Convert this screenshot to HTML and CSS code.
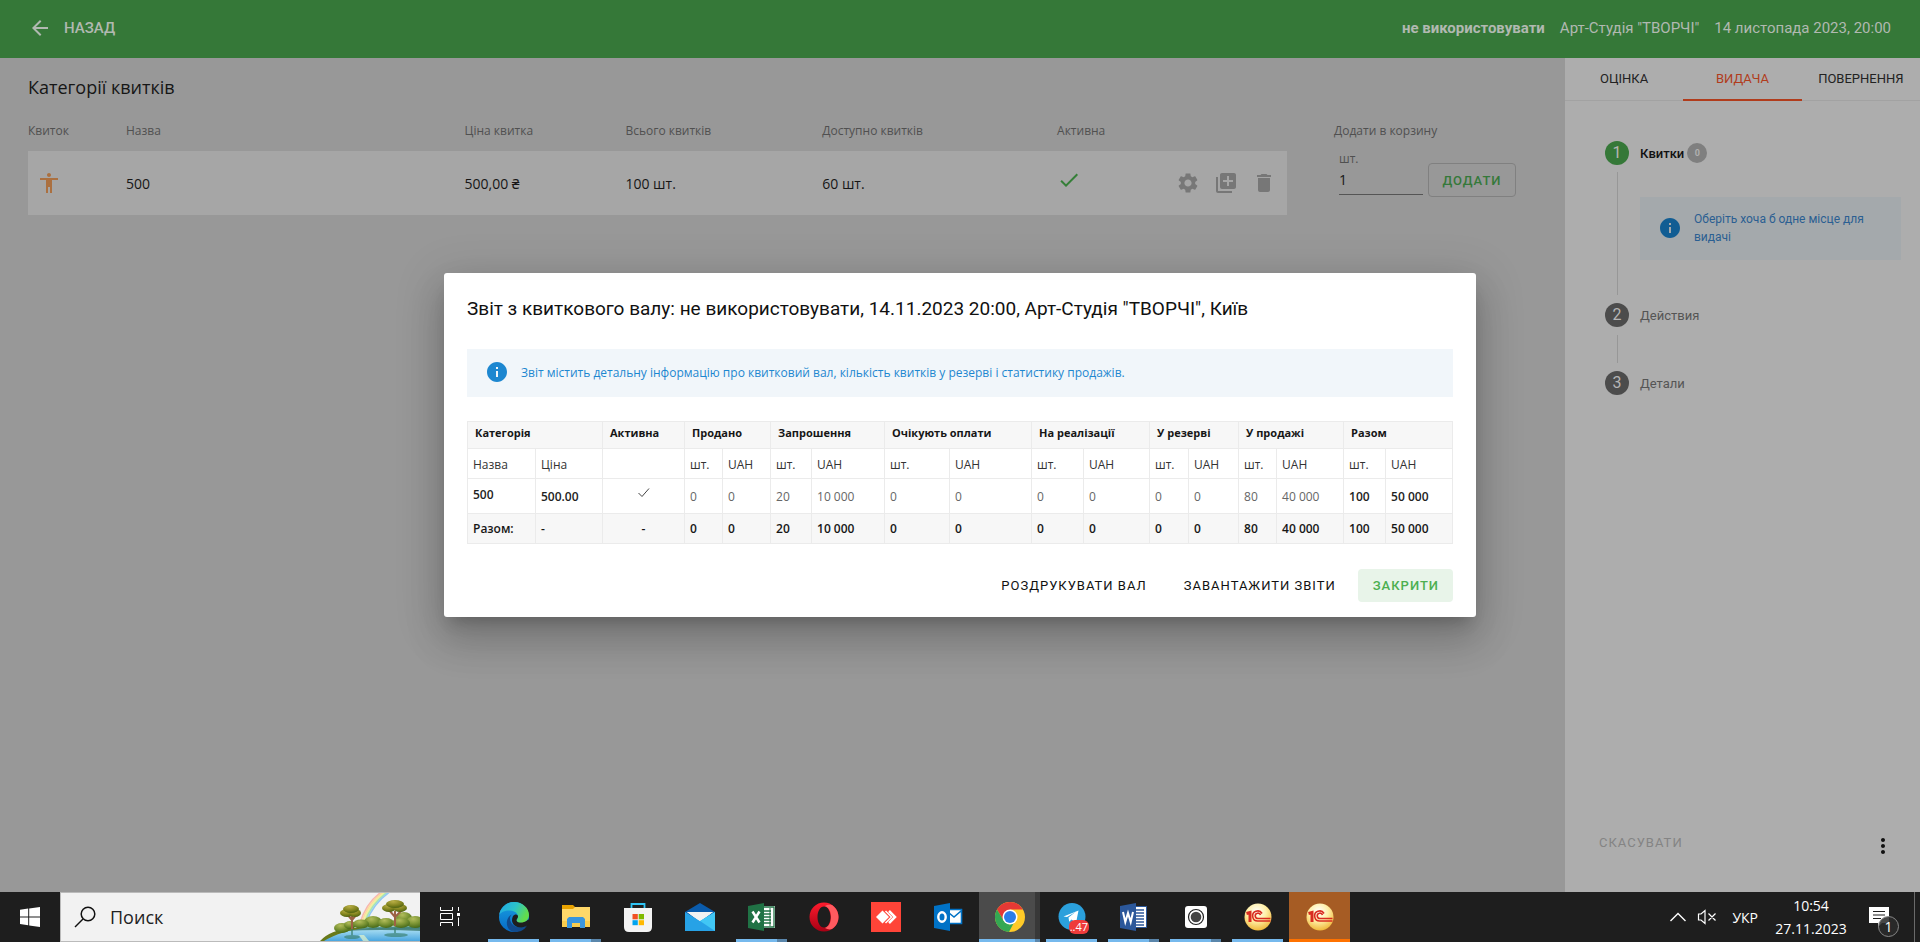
FILE: index.html
```html
<!DOCTYPE html>
<html lang="uk">
<head>
<meta charset="utf-8">
<title>Категорії квитків</title>
<link rel="stylesheet" href="styles.css">
</head>
<body>
<div class="app">
  <header class="topbar">
    <a class="back" href="#">
      <svg class="icon" viewBox="0 0 24 24"><path d="M20 11H7.83l5.59-5.59L12 4l-8 8 8 8 1.41-1.41L7.83 13H20v-2z"/></svg>
      <span>НАЗАД</span>
    </a>
    <div class="event">
      <strong>не використовувати</strong>
      <span>Арт-Студія "ТВОРЧІ"</span>
      <span>14 листопада 2023, 20:00</span>
    </div>
  </header>

  <div class="workspace">
    <main class="main">
      <h1 class="main-title">Категорії квитків</h1>
      <div class="tickets">
        <table class="categories">
          <colgroup><col class="w-ticket"><col class="w-name"><col class="w-price"><col class="w-total"><col class="w-free"><col class="w-active"><col class="w-act"><col class="w-act"><col class="w-last"></colgroup>
          <thead>
            <tr><th>Квиток</th><th>Назва</th><th>Ціна квитка</th><th>Всього квитків</th><th>Доступно квитків</th><th>Активна</th><td colspan="3"></td></tr>
          </thead>
          <tbody>
            <tr>
              <td class="cell-person"><svg class="icon person" viewBox="0 0 24 24"><path d="M12 2c1.1 0 2 .9 2 2s-.9 2-2 2-2-.9-2-2 .9-2 2-2zm9 7h-6v13h-2v-6h-2v6H9V9H3V7h18v2z"/></svg></td>
              <td>500</td>
              <td>500,00 ₴</td>
              <td>100 шт.</td>
              <td>60 шт.</td>
              <td class="cell-check"><svg class="icon check" viewBox="0 0 24 24"><path d="M9 16.17L4.83 12l-1.42 1.41L9 19 21 7l-1.41-1.41z"/></svg></td>
              <td><button class="icon-btn" aria-label="Налаштування"><svg class="icon" viewBox="0 0 24 24"><path d="M19.14 12.94c.04-.3.06-.61.06-.94 0-.32-.02-.64-.07-.94l2.03-1.58c.18-.14.23-.41.12-.61l-1.92-3.32c-.12-.22-.37-.29-.59-.22l-2.39.96c-.5-.38-1.03-.7-1.62-.94l-.36-2.54c-.04-.24-.24-.41-.48-.41h-3.84c-.24 0-.43.17-.47.41l-.36 2.54c-.59.24-1.13.57-1.62.94l-2.39-.96c-.22-.08-.47 0-.59.22L2.74 8.87c-.12.21-.08.47.12.61l2.03 1.58c-.05.3-.09.63-.09.94s.02.64.07.94l-2.03 1.58c-.18.14-.23.41-.12.61l1.92 3.32c.12.22.37.29.59.22l2.39-.96c.5.38 1.03.7 1.62.94l.36 2.54c.05.24.24.41.48.41h3.84c.24 0 .44-.17.47-.41l.36-2.54c.59-.24 1.13-.56 1.62-.94l2.39.96c.22.08.47 0 .59-.22l1.92-3.32c.12-.22.07-.47-.12-.61l-2.01-1.58zM12 15.6c-1.98 0-3.6-1.62-3.6-3.6s1.62-3.6 3.6-3.6 3.6 1.62 3.6 3.6-1.62 3.6-3.6 3.6z"/></svg></button></td>
              <td><button class="icon-btn" aria-label="Копіювати"><svg class="icon" viewBox="0 0 24 24"><path d="M4 6H2v14c0 1.1.9 2 2 2h14v-2H4V6zm16-4H8c-1.1 0-2 .9-2 2v12c0 1.1.9 2 2 2h12c1.1 0 2-.9 2-2V4c0-1.1-.9-2-2-2zm-1 9h-4v4h-2v-4H9V9h4V5h2v4h4v2z"/></svg></button></td>
              <td><button class="icon-btn" aria-label="Видалити"><svg class="icon" viewBox="0 0 24 24"><path d="M6 19c0 1.1.9 2 2 2h8c1.1 0 2-.9 2-2V7H6v12zM19 4h-3.5l-1-1h-5l-1 1H5v2h14V4z"/></svg></button></td>
            </tr>
          </tbody>
        </table>
        <div class="add">
          <div class="add-title">Додати в корзину</div>
          <div class="add-row">
            <div class="field">
              <label for="qty">шт.</label>
              <input id="qty" type="text" value="1">
            </div>
            <button class="add-btn">ДОДАТИ</button>
          </div>
        </div>
      </div>
    </main>

    <aside class="side">
      <nav class="tabs">
        <button class="tab">ОЦІНКА</button>
        <button class="tab tab-active">ВИДАЧА</button>
        <button class="tab">ПОВЕРНЕННЯ</button>
      </nav>
      <div class="steps">
        <div class="step step-on"><span class="num">1</span><span>Квитки</span><span class="badge">0</span></div>
        <div class="step-body step-body-tall">
          <div class="side-info">
            <svg class="icon" viewBox="0 0 24 24"><path d="M12 2C6.48 2 2 6.48 2 12s4.48 10 10 10 10-4.48 10-10S17.52 2 12 2zm1 15h-2v-6h2v6zm0-8h-2V7h2v2z"/></svg>
            <span>Оберіть хоча б одне місце для видачі</span>
          </div>
        </div>
        <div class="step"><span class="num">2</span><span>Действия</span></div>
        <div class="step-body"></div>
        <div class="step"><span class="num">3</span><span>Детали</span></div>
      </div>
      <div class="side-foot">
        <button class="cancel" disabled>СКАСУВАТИ</button>
        <button class="more" aria-label="Ще"><svg class="icon" viewBox="0 0 24 24"><path d="M12 8c1.1 0 2-.9 2-2s-.9-2-2-2-2 .9-2 2 .9 2 2 2zm0 2c-1.1 0-2 .9-2 2s.9 2 2 2 2-.9 2-2-.9-2-2-2zm0 6c-1.1 0-2 .9-2 2s.9 2 2 2 2-.9 2-2-.9-2-2-2z"/></svg></button>
      </div>
    </aside>
  </div>

  <div class="overlay">
    <section class="dialog" role="dialog" aria-labelledby="report-title">
      <h2 class="dialog-title" id="report-title">Звіт з квиткового валу: не використовувати, 14.11.2023 20:00, Арт-Студія "ТВОРЧІ", Київ</h2>
      <div class="info">
        <svg class="icon" viewBox="0 0 24 24"><path d="M12 2C6.48 2 2 6.48 2 12s4.48 10 10 10 10-4.48 10-10S17.52 2 12 2zm1 15h-2v-6h2v6zm0-8h-2V7h2v2z"/></svg>
        <span>Звіт містить детальну інформацію про квитковий вал, кількість квитків у резерві і статистику продажів.</span>
      </div>
      <table class="report">
        <colgroup><col class="r68"><col class="r67"><col class="r82"><col class="r38"><col class="r48"><col class="r41"><col class="r73"><col class="r65"><col class="r82"><col class="r52"><col class="r66"><col class="r39"><col class="r50"><col class="r38"><col class="r67"><col class="r42"><col class="r67"></colgroup>
        <thead>
          <tr><th colspan="2">Категорія</th><th>Активна</th><th colspan="2">Продано</th><th colspan="2">Запрошення</th><th colspan="2">Очікують оплати</th><th colspan="2">На реалізації</th><th colspan="2">У резерві</th><th colspan="2">У продажі</th><th colspan="2">Разом</th></tr>
        </thead>
        <tbody>
          <tr class="r-sub"><td>Назва</td><td>Ціна</td><td></td><td>шт.</td><td>UAH</td><td>шт.</td><td>UAH</td><td>шт.</td><td>UAH</td><td>шт.</td><td>UAH</td><td>шт.</td><td>UAH</td><td>шт.</td><td>UAH</td><td>шт.</td><td>UAH</td></tr>
          <tr class="r-data"><td class="bold raised">500</td><td class="bold">500.00</td><td class="mid raised"><svg class="tick" viewBox="0 0 14 12"><path d="M1.500 6l3.500 3.500 7-8"/></svg></td><td>0</td><td>0</td><td>20</td><td>10 000</td><td>0</td><td>0</td><td>0</td><td>0</td><td>0</td><td>0</td><td>80</td><td>40 000</td><td class="bold">100</td><td class="bold">50 000</td></tr>
          <tr class="r-sum"><td>Разом:</td><td>-</td><td class="mid">-</td><td>0</td><td>0</td><td>20</td><td>10 000</td><td>0</td><td>0</td><td>0</td><td>0</td><td>0</td><td>0</td><td>80</td><td>40 000</td><td>100</td><td>50 000</td></tr>
        </tbody>
      </table>
      <div class="actions">
        <button class="btn">РОЗДРУКУВАТИ ВАЛ</button>
        <button class="btn">ЗАВАНТАЖИТИ ЗВІТИ</button>
        <button class="btn btn-close">ЗАКРИТИ</button>
      </div>
    </section>
  </div>
</div>

<footer class="taskbar">
  <button class="start" aria-label="Пуск"><svg width="20" height="20" viewBox="0 0 20 20"><path fill="#fff" d="M0 2.8L8.2 1.6V9.4H0zM9.2 1.4L20 0V9.4H9.2zM0 10.4H8.2V18.2L0 17.1zM9.2 10.4H20V20L9.2 18.5z"/></svg></button>
  <div class="search">
    <svg class="loupe" width="22" height="22" viewBox="0 0 22 22"><circle cx="14" cy="8" r="6.8"/><path d="M9 13L1 21"/></svg>
    <input type="text" placeholder="Поиск" aria-label="Поиск">
    <svg class="scene" width="100" height="48" viewBox="0 0 100 48">
      <defs>
        <linearGradient id="water" x1="0" y1="0" x2="0" y2="1"><stop offset="0" stop-color="#4f9f9c"/><stop offset=".3" stop-color="#9fd8f0"/><stop offset="1" stop-color="#4aa6e0"/></linearGradient>
        <radialGradient id="bush" cx=".4" cy=".25" r=".8"><stop offset="0" stop-color="#b3bd5c"/><stop offset=".5" stop-color="#7b9434"/><stop offset="1" stop-color="#3f6416"/></radialGradient>
        <radialGradient id="crown" cx=".4" cy=".2" r=".8"><stop offset="0" stop-color="#b9ae45"/><stop offset=".6" stop-color="#82841f"/><stop offset="1" stop-color="#4f6312"/></radialGradient>
      </defs>
      <g fill="none" stroke-width="1.6"><path stroke="#f8b6b0" d="M40 30Q47 8 63-2"/><path stroke="#fbdc9c" d="M41.500 30Q48 9 65-2"/><path stroke="#f4f09a" d="M43 30Q50 9 67-2"/><path stroke="#a9e6b2" d="M44.500 30Q51 10 69-2"/><path stroke="#94c8f2" d="M46 30Q53 10 71-2"/></g>
      <path fill="url(#water)" d="M3 48Q16 36 42 34L100 33V48z"/>
      <path fill="#2f6b5e" opacity=".7" d="M24 38Q38 34 100 34V38Q60 36 24 38z"/>
      <path fill="#68791a" d="M0 48Q10 37 32 35L50 34Q20 38 4 48z"/>
      <g fill="url(#bush)"><ellipse cx="22" cy="35" rx="8" ry="5"/><ellipse cx="30" cy="32" rx="6" ry="4"/><ellipse cx="53" cy="29" rx="9" ry="6"/><ellipse cx="84" cy="25" rx="8" ry="6"/><ellipse cx="95" cy="29" rx="9" ry="6"/><ellipse cx="66" cy="30" rx="8" ry="5"/><ellipse cx="81" cy="30" rx="9" ry="5"/><ellipse cx="41" cy="31" rx="8" ry="4.500"/></g>
      <path stroke="#9c6244" stroke-width="2" fill="none" d="M32 36V23M32 27L27 21M32 27L37 21M75 33V18M75 24L69 17M75 24L82 17"/>
      <g fill="url(#crown)"><ellipse cx="27" cy="20" rx="7" ry="4"/><ellipse cx="35" cy="20" rx="6" ry="4"/><ellipse cx="31" cy="16" rx="8" ry="4"/><ellipse cx="69" cy="15" rx="7" ry="4"/><ellipse cx="80" cy="15" rx="7" ry="4"/><ellipse cx="75" cy="11" rx="9" ry="4"/></g>
      <g fill="#39806f" opacity=".65"><ellipse cx="32" cy="44" rx="8" ry="2"/><ellipse cx="76" cy="42" rx="12" ry="2"/><path d="M31 36h2v8h-2zM74 35h2v8h-2z"/></g>
      <path fill="#e3f3cb" opacity=".7" d="M39 42L44 42 49 48H43z"/>
    </svg>
  </div>
  <button class="taskview" aria-label="Представление задач"><svg width="21" height="20" viewBox="0 0 21 20"><g fill="none" stroke="#fff"><path d="M.5 0v3.500h12V0M.5 19v-3.500h12V19M.5 6.500h12v6H.5zM18.500 0v4M18.500 10.500V19"/></g><path fill="#fff" d="M17 6h3v3h-3z"/></svg></button>

  <div class="tasks">
    <button class="task run" aria-label="Edge"><svg viewBox="0 0 32 32">
      <defs><linearGradient id="eTop" x1="0" y1="0" x2="1" y2=".4"><stop offset="0" stop-color="#1fa6e8"/><stop offset=".55" stop-color="#2cc3c9"/><stop offset="1" stop-color="#62dc4c"/></linearGradient><linearGradient id="eL" x1="0" y1="0" x2="0" y2="1"><stop offset="0" stop-color="#1aa0e2"/><stop offset="1" stop-color="#0669c4"/></linearGradient></defs>
      <circle cx="16" cy="16" r="15" fill="url(#eL)"/><path fill="#114a8b" d="M12 17c0 6 5 9.500 10 9.500 3 0 5-.8 7-2C26.500 29 22 31 17.500 31 11 31 8 25 9 20c.6-3.500 3-6 6-7-2 1-3 2.500-3 4z"/><path fill="#1e1e1e" d="M15 15c1-1.500 3.500-2 4.500-1 1.200 1.500.5 3-.5 4-1 1.200 0 3.200 3.500 3.200 3.500 0 6-1.500 9-3.200L32 23l-3 1.500c-2 1.600-4.500 2-7 2-4.500-.3-7.800-3.500-8-7 0-1.500.3-3.200 1-4.500z"/><path fill="url(#eTop)" d="M1.300 14C2 7 8.500 1 16 1c8.500 0 15 6 15 13 0 5-4 7.500-8 7.500-3.500 0-5-1.500-4-3 1-1.500 1.500-3 .5-5-1.500-3-5-4-8-4-5 0-9 2-10.200 4.500z"/></svg></button>
    <button class="task run multi" aria-label="Проводник"><svg viewBox="0 0 32 32"><path fill="#e8a200" d="M2 4h11l3 3v4H2z"/><path fill="#ffd869" d="M2 8h11l2-2h15v20H2z"/><path fill="#f9cd4d" d="M2 20h28v6H2z"/><path fill="#3a96dd" d="M9 16h14l2 2v9h-5v-5h-8v5H7v-9z"/></svg></button>
    <button class="task" aria-label="Магазин"><svg viewBox="0 0 32 32"><path fill="none" stroke="#2fc4f4" stroke-width="1.800" d="M9.500 9V3h13v6"/><path fill="#f3f3f3" d="M2 7h28v19q0 5-5 5H7q-5 0-5-5z"/><path fill="#f25022" d="M10.500 13h5.300v5.300h-5.300z"/><path fill="#7fba00" d="M16.700 13H22v5.300h-5.300z"/><path fill="#00a4ef" d="M10.500 19.200h5.300v5h-5.300z"/><path fill="#ffb900" d="M16.700 19.200H22v5h-5.300z"/></svg></button>
    <button class="task" aria-label="Почта"><svg viewBox="0 0 32 32"><path fill="#0a5bab" d="M1 11L16 2l15 9v7H1z"/><path fill="#f2f2f2" d="M3 11h26L16 21z"/><path fill="#27a2e6" d="M1 11l15 9 15-9v19H1z"/><path fill="#f2f2f2" d="M3 11h26L16 20z"/><path fill="#41c7f5" d="M31 11L16 20l15 10z"/></svg></button>
    <button class="task run multi" aria-label="Excel"><svg viewBox="0 0 32 32"><path fill="#fff" d="M15 5h14v22H15z"/><path fill="none" stroke="#207245" stroke-width="1.300" d="M16 6h12v20H16M16 10h9M16 13h9M16 16h9M16 19h9M16 22h9"/><path fill="#207245" d="M2 5l16-3v28L2 27zM23.500 7h1v18h-1z"/><path stroke="#fff" stroke-width="2.500" d="M6.500 10.500l7 11M13.500 10.500l-7 11"/></svg></button>
    <button class="task" aria-label="Opera"><svg viewBox="0 0 32 32"><defs><linearGradient id="op" x1="0" y1="0" x2="0" y2="1"><stop offset="0" stop-color="#ff1b2d"/><stop offset="1" stop-color="#a70014"/></linearGradient></defs><path fill="url(#op)" fill-rule="evenodd" d="M16 1.500a14.500 14.500 0 1 0 0 29 14.500 14.500 0 0 0 0-29zm0 4c4 0 6.500 5 6.500 10.500S20 26.500 16 26.500 9.500 21.500 9.500 16 12 5.500 16 5.500z"/><path fill="#ff5a5f" d="M17 5c2-1.500 4.500-1.500 7-1 4 3 6.500 7 6.500 12s-2.500 9.500-6.500 12c-2.500.8-5 .3-7-1 4-1.500 6-6 6-11s-2-9.500-6-11z"/></svg></button>
    <button class="task" aria-label="AnyDesk"><svg viewBox="0 0 32 32"><path fill="#ff4438" d="M1 1h30v30H1z"/><path fill="#fff" d="M6 16l6.500-6.500L19 16l-6.500 6.500z"/><path fill="none" stroke="#fff" stroke-width="2.500" d="M19 10l6 6-6 6"/><path fill="none" stroke="#fff" stroke-width="1.500" d="M15.500 10l6 6-6 6"/></svg></button>
    <button class="task" aria-label="Outlook"><svg viewBox="0 0 32 32"><path fill="#fff" d="M15 8h14v15H15z"/><path fill="none" stroke="#0072c6" stroke-width="1.600" d="M16 8.500h13.500v14H16M17 12l5 4 7-6"/><path fill="#0072c6" d="M2 5l16-3v28L2 27z"/><ellipse cx="10" cy="16" rx="3.700" ry="4.700" fill="none" stroke="#fff" stroke-width="2.400"/></svg></button>
    <button class="task run multi current" aria-label="Chrome"><svg viewBox="0 0 32 32"><circle cx="16" cy="16" r="15" fill="#ffca28"/><path fill="#e53935" d="M16 8.500h13A15 15 0 0 0 3 8.500l6.500 11z"/><path fill="#34a853" d="M3 8.500l6.500 11 6.500 4-4 7A15 15 0 0 1 3 8.500z"/><path fill="#34a853" d="M16 23.500l4-2-5 9.500-4-1z"/><circle cx="16" cy="16" r="7.500" fill="#fff"/><circle cx="16" cy="16" r="6" fill="#2b7de9"/></svg></button>
    <button class="task run" aria-label="Telegram"><svg viewBox="0 0 32 32"><circle cx="16" cy="15.500" r="13.500" fill="#2ba0dc"/><path fill="#fff" d="M7.500 15.500L22.500 9.500 20 22l-4.500-3.500-2.300 2.200-.7-4.200 7-5.500-8.500 5z"/></svg><span class="count">..47</span></button>
    <button class="task run multi" aria-label="Word"><svg viewBox="0 0 32 32"><path fill="#fff" stroke="#2b579a" d="M15 5.500h13.500v21H15z"/><path stroke="#2b579a" stroke-width="1.300" d="M17 9h9M17 12h9M17 15h9M17 18h9M17 21h9M17 24h9"/><path fill="#2b579a" d="M2 5l16-3v28L2 27z"/><path fill="none" stroke="#fff" stroke-width="2" d="M5 11l2.300 10L10 12l2.700 9L15 11"/></svg></button>
    <button class="task run multi" aria-label="Камера"><svg viewBox="0 0 32 32"><rect x="5" y="5" width="22" height="22" rx="3" fill="#fff"/><circle cx="16" cy="16" r="7.500" fill="none" stroke="#222" stroke-width="1.200"/><circle cx="16" cy="16" r="5.300" fill="#444"/></svg></button>
    <button class="task run" aria-label="1С"><svg viewBox="0 0 32 32"><defs><radialGradient id="gold" cx=".45" cy=".3" r=".7"><stop offset="0" stop-color="#fff"/><stop offset=".5" stop-color="#fff0a8"/><stop offset="1" stop-color="#f0b83c"/></radialGradient></defs><circle cx="16" cy="16" r="13.500" fill="url(#gold)"/><path fill="none" stroke="#d92b20" stroke-width="3" d="M4.500 12.500L8 11.500v9.500"/><path fill="none" stroke="#d92b20" stroke-width="1.600" d="M20 12.500a5 5 0 1 0-4 7.500H28.500M18.500 14a2.700 2.700 0 1 0-2.500 3.500H28.500"/></svg></button>
    <button class="task run alert" aria-label="1С:Предприятие"><svg viewBox="0 0 32 32"><circle cx="16" cy="16" r="13.500" fill="url(#gold)"/><path fill="none" stroke="#d92b20" stroke-width="3" d="M4.500 12.500L8 11.500v9.500"/><path fill="none" stroke="#d92b20" stroke-width="1.600" d="M20 12.500a5 5 0 1 0-4 7.500H28.500M18.500 14a2.700 2.700 0 1 0-2.500 3.500H28.500"/></svg></button>
  </div>

  <div class="tray">
    <svg width="16" height="10" viewBox="0 0 16 10"><path fill="none" stroke="#fff" stroke-width="1.400" d="M.5 9L8 1.500 15.500 9"/></svg>
    <svg width="20" height="16" viewBox="0 0 20 16"><path fill="none" stroke="#fff" stroke-width="1.200" d="M1.500 5h2.500L8 1.500v13L4 11H1.500zM11.500 4.500l7 7M18.500 4.500l-7 7"/></svg>
    <span class="lang">УКР</span>
    <div class="clock"><span>10:54</span><span>27.11.2023</span></div>
    <button class="notes" aria-label="Уведомления"><svg width="20" height="20" viewBox="0 0 20 20"><path fill="#fff" d="M0 0h20v16h-7l-4 4v-4H0z"/><path stroke="#1e1e1e" stroke-width="1.200" d="M4 4.500h12M4 8h12M4 11.500h8"/></svg><span class="notes-count">1</span></button>
    <span class="desk"></span>
  </div>
</footer>
</body>
</html>
```
FILE: styles.css
```css
* { box-sizing: border-box; }

body {
  margin: 0;
  min-height: 100vh;
  display: flex;
  flex-direction: column;
  font-family: "Open Sans", "Noto Sans", sans-serif;
  color: #161616;
  background: #989898;
}

button { border: 0; padding: 0; background: none; font: inherit; color: inherit; }
.icon { width: 24px; height: 24px; fill: currentColor; display: block; flex: none; }

.app { flex: 1; display: flex; flex-direction: column; position: relative; }

.topbar {
  height: 58px;
  padding: 0 29px 2px 28px;
  display: flex;
  align-items: center;
  justify-content: space-between;
  background: #357838;
  color: #b1b9b1;
  font: 15px/24px Roboto, sans-serif;
}
.back { display: flex; align-items: center; gap: 12px; color: inherit; text-decoration: none; font-weight: 500; }
.event { display: flex; gap: 15px; }

.workspace { flex: 1; display: flex; }
.main { flex: 1; padding: 16px 0 0 28px; }
.main-title { margin: 0; font-size: 18px; line-height: 26px; font-weight: 400; }
.tickets { display: flex; gap: 47px; padding-top: 18px; }

.categories { flex: 1; table-layout: fixed; border-collapse: collapse; align-self: flex-start; }
.categories th { height: 33px; padding: 0 0 7px; text-align: left; font-size: 12px; line-height: 18px; font-weight: 400; color: #505050; }
.categories td { padding: 0; }
.categories tbody td { height: 64px; font-size: 14px; background: #a6a6a6; }
.categories .cell-person { padding-left: 9px; }
.categories .cell-check { padding-bottom: 6px; }
.w-ticket { width: 98px; }
.w-name { width: 339px; }
.w-price { width: 161px; }
.w-total { width: 197px; }
.w-free { width: 235px; }
.w-active { width: 113px; }
.w-act { width: 38px; }
.w-last { width: 41px; }
.person { color: #ab7040; }
.check { color: #357f38; }
.icon-btn { display: block; margin-left: 6px; color: #777; }

.add { width: 231px; color: #505050; font-size: 12px; line-height: 18px; }
.add-title { padding-top: 4px; }
.add-row { display: flex; align-items: flex-end; gap: 5px; padding: 10px 0 0 5px; }
.field { width: 84px; margin-bottom: 2px; }
.field label { display: block; }
.field input {
  display: block;
  width: 100%;
  height: 27px;
  padding: 0 0 4px;
  border: 0;
  border-bottom: 1px solid #555;
  background: none;
  font: 14px "Open Sans", sans-serif;
  color: #161616;
}
.add-btn {
  width: 88px;
  height: 34px;
  border: 1px solid #808080;
  border-radius: 4px;
  color: #35793a;
  font: 500 13px Roboto, sans-serif;
  letter-spacing: 1px;
}

.side { width: 355px; background: #adadad; display: flex; flex-direction: column; font-family: Roboto, sans-serif; }
.tabs { display: grid; grid-template-columns: repeat(3, 1fr); border-bottom: 1px solid #a2a2a2; }
.tab { height: 43px; margin-bottom: -1px; font-size: 13px; font-weight: 400; color: #222; border-bottom: 2px solid transparent; }
.tab-active { color: #b13c1c; border-color: #b13c1c; }
.steps { flex: 1; padding: 40px 19px 0 40px; font-size: 13px; }
.step { display: flex; align-items: center; height: 24px; color: #555; }
.step-on { color: #111; font-weight: 500; }
.num { width: 24px; height: 24px; margin-right: 11px; border-radius: 12px; background: #4c4c4c; color: #b5b5b5; text-align: center; font-size: 16px; font-weight: 400; line-height: 24px; }
.step-on .num { background: #357838; }
.badge { width: 20px; height: 20px; margin-left: 3px; border-radius: 10px; background: #7f7f7f; color: #b0b0b0; text-align: center; font-size: 9px; font-weight: 700; line-height: 20px; }
.step-body { height: 28px; margin: 8px 0 8px 12px; border-left: 1px solid #979797; }
.step-body-tall { height: 123px; margin-top: 7px; padding: 25px 0 0 22px; }
.side-info { display: flex; align-items: center; gap: 12px; min-height: 63px; padding: 0 18px 2px; background: #a4a9ac; color: #2b5f92; font-size: 12px; line-height: 18px; }
.side-info .icon { color: #115d93; }
.side-foot { display: flex; justify-content: space-between; align-items: center; padding: 0 25px 34px 34px; }
.cancel { padding-bottom: 7px; color: #848484; font-size: 13px; letter-spacing: 1px; }
.more { color: #111; }

.overlay { position: absolute; inset: 0; display: flex; align-items: center; justify-content: center; padding-bottom: 2px; overflow: hidden; }
.dialog {
  width: 1032px;
  max-width: 90%;
  padding: 22px 23px 15px;
  border-radius: 3px;
  background: #fff;
  box-shadow: 0 11px 15px -7px rgba(0,0,0,.2), 0 24px 38px 3px rgba(0,0,0,.14), 0 9px 46px 8px rgba(0,0,0,.12);
}
.dialog-title { margin: 0 0 26px; font: 400 19px/28px Roboto, sans-serif; color: #111; }
.info { display: flex; align-items: center; gap: 12px; height: 48px; padding: 0 18px 2px; background: #f1f6fa; color: #1d87d0; font-size: 12px; }
.report { width: 100%; margin-top: 24px; table-layout: fixed; border-collapse: collapse; font-size: 12px; line-height: 16px; }
.report th, .report td { border: 1px solid #ebebeb; padding: 0 0 0 5px; text-align: left; white-space: nowrap; }
.report th { height: 27px; padding: 0 0 4px 7px; background: #f7f7f7; font-size: 11px; font-weight: 700; }
.r-sub td { height: 30px; padding-top: 3px; color: #333; }
.r-data td { height: 35px; padding-top: 1px; color: #666; }
.r-sum td { height: 30px; background: #f7f7f7; font-weight: 600; }
.report .bold { font-weight: 600; color: #222; }
.report .mid { text-align: center; padding-left: 0; }
.report .raised { padding-bottom: 4px; }
.tick { width: 14px; height: 12px; fill: none; stroke: #444; }
.r68 { width: 68px; } .r67 { width: 67px; } .r82 { width: 82px; } .r38 { width: 38px; }
.r48 { width: 48px; } .r41 { width: 41px; } .r73 { width: 73px; } .r65 { width: 65px; }
.r52 { width: 52px; } .r66 { width: 66px; } .r39 { width: 39px; } .r50 { width: 50px; } .r42 { width: 42px; }
.actions { display: flex; justify-content: flex-end; gap: 8px; margin-top: 25px; }
.btn { height: 33px; padding: 0 14px 0 15px; border-radius: 4px; color: #111; font: 400 13px Roboto, sans-serif; letter-spacing: 1px; }
.btn-close { background: #e8f4e9; color: #4caf50; font-weight: 500; }

.taskbar { display: flex; height: 50px; background: #1e1e1e; color: #fff; }
.start { width: 60px; display: flex; align-items: center; justify-content: center; }
.search { width: 360px; display: flex; align-items: center; background: #f2f2f2; border: 1px solid #bbb; border-right: 0; }
.loupe { margin-left: 13px; fill: none; stroke: #111; stroke-width: 1.500; }
.search input { flex: 1; min-width: 0; margin-left: 14px; padding: 0; border: 0; background: none; font: 18px "Open Sans", sans-serif; }
.search input::placeholder { color: #222; opacity: 1; }
.scene { flex: none; }
.taskview { width: 60px; display: flex; align-items: center; justify-content: center; }
.tasks { display: flex; padding-left: 3px; }
.task { position: relative; width: 61px; margin-right: 1px; display: flex; align-items: center; justify-content: center; }
.task svg { width: 32px; height: 32px; }
.run::after { content: ""; position: absolute; left: 5px; right: 5px; bottom: 0; height: 3px; background: #76b9ed; }
.multi::after { background: linear-gradient(90deg, #76b9ed 80%, #5a86ab 80%); }
.current { background: linear-gradient(90deg, #4b4b4b 92%, #383838 92%); }
.current::after { left: 0; right: 0; background: linear-gradient(90deg, #76b9ed 92%, #5a86ab 92%); }
.alert { background: #a65c24; }
.alert::after { left: 0; right: 0; background: #ff7200; }
.count { position: absolute; right: 13px; bottom: 8px; height: 14px; padding: 0 1px; border-radius: 6px; background: #ef3b3b; font-size: 11px; line-height: 13px; }
.tray { margin-left: auto; display: flex; align-items: center; font-size: 14px; }
.tray svg { display: block; }
.tray > svg + svg { margin-left: 11px; }
.lang { margin-left: 15px; }
.clock { width: 80px; margin-left: 13px; display: flex; flex-direction: column; align-items: center; line-height: 23px; }
.notes { position: relative; margin-left: 18px; }
.notes-count { position: absolute; left: 9px; top: 9px; width: 21px; height: 21px; border: 1px solid #888; border-radius: 11px; background: #2b2b2bdd; font-size: 14px; line-height: 19px; text-align: center; }
.desk { width: 1px; height: 50px; margin: 0 5px 0 25px; background: #6a6a6a; }
```
